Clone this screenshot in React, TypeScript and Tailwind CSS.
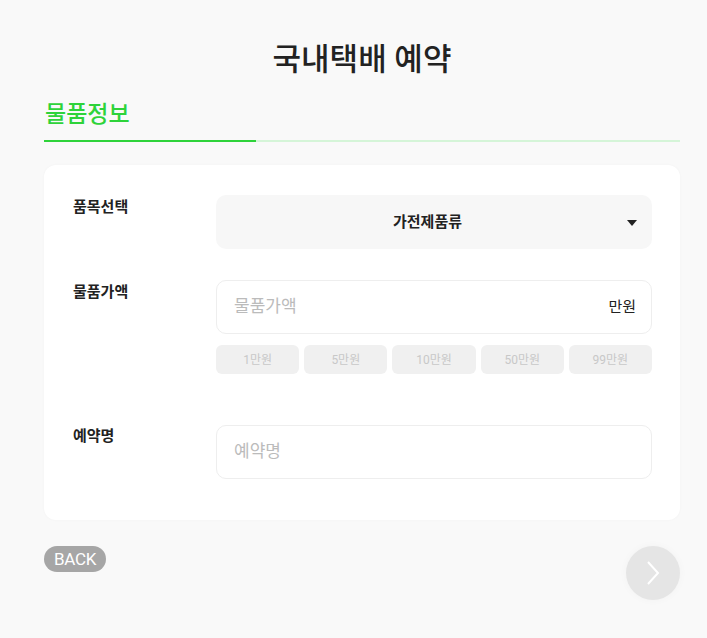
import { useState } from 'react'

const amounts = ['1만원', '5만원', '10만원', '50만원', '99만원']

export default function App() {
  const [price, setPrice] = useState('')
  const [name, setName] = useState('')

  return (
    <main
      className="min-h-screen bg-[#f9f9f9] pl-[44px] pr-[27px] pt-[38px] pb-10"
      style={{ fontFamily: 'Roboto, "Noto Sans CJK KR", sans-serif' }}
    >
      {/* Title */}
      <h1 className="text-center text-[31px] leading-[44px] font-medium text-[#222]">국내택배 예약</h1>

      {/* Tab */}
      <div className="mt-[16px]">
        <div className="px-[1px] text-[23px] leading-[34px] font-medium text-[#2ed33a]">물품정보</div>
        <div className="mt-[8px] flex h-[2px]">
          <div className="w-[212px] bg-[#2ed33a]" />
          <div className="flex-1 bg-[#d5f5d8]" />
        </div>
      </div>

      {/* Form card */}
      <section className="mt-[23px] rounded-[12px] bg-white pl-[29px] pr-[28px] pt-[30px] pb-[41px] shadow-[0_0_3px_rgba(0,0,0,0.03)]">
        <div className="flex">
          <label className="w-[143px] pt-[1px] text-[15px] font-bold text-[#222]">품목선택</label>
          <button className="relative flex h-[54px] flex-1 items-center justify-center rounded-[10px] bg-[#f7f7f7] pr-[13px] text-[15px] font-bold text-[#222]">
            가전제품류
            <svg className="absolute right-[15px] top-[25px]" width="10" height="6" viewBox="0 0 10 6">
              <path d="M0 0h10L5 6z" fill="#222" />
            </svg>
          </button>
        </div>

        <div className="mt-[31px] flex">
          <label className="w-[143px] pt-[1px] text-[15px] font-bold text-[#222]">물품가액</label>
          <div className="flex-1">
            <div className="flex h-[54px] items-center rounded-[10px] border border-[#eeeeee] pl-[17px] pr-[15px]">
              <input
                value={price}
                onChange={(e) => setPrice(e.target.value)}
                placeholder="물품가액"
                className="min-w-0 flex-1 bg-transparent text-[17px] text-[#222] outline-none placeholder:text-[#bbbbbb]"
              />
              <span className="text-[15px] text-[#222]">만원</span>
            </div>
            <div className="mt-[11px] grid grid-cols-5 gap-[5px]">
              {amounts.map((a) => (
                <button
                  key={a}
                  className="h-[29px] rounded-[6px] bg-[#f0f0f0] text-[12px] text-[#c8c8c8]"
                >
                  {a}
                </button>
              ))}
            </div>
          </div>
        </div>

        <div className="mt-[51px] flex">
          <label className="w-[143px] pt-[0px] text-[15px] font-bold text-[#222]">예약명</label>
          <div className="flex h-[54px] flex-1 items-center rounded-[10px] border border-[#eeeeee] pl-[17px] pr-[15px]">
            <input
              value={name}
              onChange={(e) => setName(e.target.value)}
              placeholder="예약명"
              className="min-w-0 flex-1 bg-transparent text-[17px] text-[#222] outline-none placeholder:text-[#bbbbbb]"
            />
          </div>
        </div>
      </section>

      {/* Bottom nav */}
      <div className="mt-[26px] flex items-start justify-between">
        <button className="h-[26px] rounded-full bg-[#a6a6a6] px-[10px] text-[17px] leading-[26px] text-white tracking-[-0.3px]">
          BACK
        </button>
        <button className="flex h-[54px] w-[54px] items-center justify-center rounded-full bg-[#e5e5e5] shadow-[0_0_8px_rgba(0,0,0,0.03)]">
          <svg width="14" height="26" viewBox="0 0 14 26" fill="none">
            <path d="M2 2l10 11L2 24" stroke="#fff" strokeWidth="2" />
          </svg>
        </button>
      </div>
    </main>
  )
}
